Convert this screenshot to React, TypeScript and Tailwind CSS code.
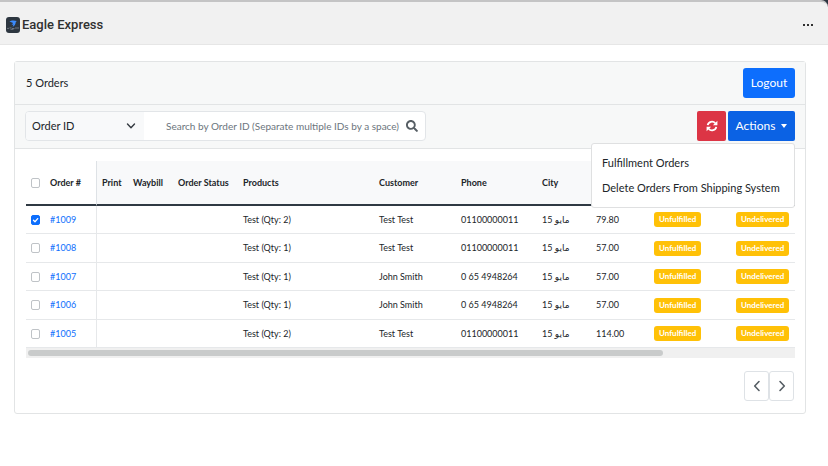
import { useState } from "react";
import { FaSearch } from "react-icons/fa";

const orders = [
  { id: "#1009", products: "Test (Qty: 2)", customer: "Test Test", phone: "01100000011", total: "79.80" },
  { id: "#1008", products: "Test (Qty: 1)", customer: "Test Test", phone: "01100000011", total: "57.00" },
  { id: "#1007", products: "Test (Qty: 1)", customer: "John Smith", phone: "0 65 4948264", total: "57.00" },
  { id: "#1006", products: "Test (Qty: 1)", customer: "John Smith", phone: "0 65 4948264", total: "57.00" },
  { id: "#1005", products: "Test (Qty: 2)", customer: "Test Test", phone: "01100000011", total: "114.00" },
];

const headings = ["Print", "Waybill", "Order Status", "Products", "Customer", "Phone", "City"];

function Tick({ label, checked, onChange }: { label: string; checked: boolean; onChange: () => void }) {
  return (
    <span className="relative mx-auto block h-[10px] w-[9px]">
      <input
        type="checkbox"
        aria-label={label}
        checked={checked}
        onChange={onChange}
        className="block h-full w-full appearance-none rounded-[2px] border border-[#bfc3c7] bg-white checked:border-[#0d6efd] checked:bg-[#0d6efd]"
      />
      {checked && (
        <svg viewBox="0 0 9 10" className="pointer-events-none absolute inset-0" fill="none" stroke="white" strokeWidth="1.3" strokeLinecap="round" strokeLinejoin="round">
          <path d="M2.5 5.2 4 6.7 6.7 3.6" />
        </svg>
      )}
    </span>
  );
}

function Badge({ children }: { children: string }) {
  return (
    <span className="inline-block h-[15px] rounded-[3px] bg-[#ffc107] px-[5px] align-middle text-[8px] leading-[15px] font-bold text-white">
      {children}
    </span>
  );
}

function Chevron({ d }: { d: string }) {
  return (
    <svg viewBox="0 0 10 14" className="h-[14px] w-[10px]" fill="none" stroke="#565e64" strokeWidth="1.6" strokeLinecap="round" strokeLinejoin="round">
      <path d={d} />
    </svg>
  );
}

function RefreshIcon() {
  return (
    <svg viewBox="0 0 12 12" className="h-3 w-3" aria-hidden="true">
      <path d="M1.700 5.200A4.300 4.300 0 0 1 9.300 3.300M10.300 6.800A4.300 4.300 0 0 1 2.700 8.700" fill="none" stroke="white" strokeWidth="1.800" />
      <path d="M11.400.7v4.500H6.900zM.6 11.300V6.800h4.500z" fill="white" />
    </svg>
  );
}

function TopBar() {
  return (
    <div className="bg-[#2c3440]">
      <header className="flex h-[45px] items-center justify-between rounded-tr-[7px] border-t-2 border-b border-t-[#c4c4c5] border-b-[#e6e6e6] bg-[#f1f1f1] pt-[3px] pr-[15px] pl-[6px]">
        <div className="flex items-center gap-[2px]">
          <svg viewBox="0 0 14 16" className="h-4 w-[14px]" aria-hidden="true">
            <rect width="14" height="16" rx="3" fill="#2d3640" />
            <path d="M3.300 4.600C5 3.300 8 3 10.800 4L9.800 5C9.600 7.200 8.600 8.900 6.600 10c.4-1 .9-1.900.6-2.700-.5.300-1.100.6-1.700.9.300-1 .9-1.600 1.700-2.200-1.200-.5-2.500-1-3.900-1.400z" fill="#3b8cff" />
            <path d="M1 11.400h2M3.500 10.900h2M6 11.500h2.500M9 11h4M4.500 12.300h3" stroke="#7d8791" strokeWidth=".8" />
          </svg>
          <h1 className="font-[Roboto,sans-serif] text-[13px] leading-5 font-medium text-[#303030]">Eagle Express</h1>
        </div>
        <button type="button" aria-label="More" className="flex gap-[2px]">
          <i className="h-[2px] w-[2px] bg-[#303030]" />
          <i className="h-[2px] w-[2px] bg-[#303030]" />
          <i className="h-[2px] w-[2px] bg-[#303030]" />
        </button>
      </header>
    </div>
  );
}

export default function App() {
  const [selected, setSelected] = useState<string[]>(["#1009"]);
  const toggle = (id: string) =>
    setSelected((s) => (s.includes(id) ? s.filter((x) => x !== id) : [...s, id]));
  const all = selected.length === orders.length;

  return (
    <div className="min-h-screen bg-white font-[Lato,'DejaVu_Sans',sans-serif] text-[#212529]">
      <TopBar />
      <main className="mt-4 mr-[22px] ml-[14px] rounded-[3px] border border-[#e2e4e5]">
        <div className="flex h-[43px] items-center justify-between border-b border-[#e2e4e5] bg-[#f7f8f8] pr-[10px] pl-[11px]">
          <h2 className="text-[11px] leading-4">5 Orders</h2>
          <button type="button" className="h-[30px] w-[52px] rounded-[3px] bg-[#0d6efd] text-[12px] text-white">Logout</button>
        </div>

        <div className="flex h-[44px] items-start justify-between border-b border-[#e2e4e5] bg-[#f7f8f8] px-[10px] pt-[6px]">
          <div className="flex h-[30px] w-[401px] overflow-hidden rounded-[4px] border border-[#e2e5e8] bg-white">
            <div className="relative w-[118px] bg-[#f8f9fa]">
              <select aria-label="Search field" className="h-full w-full appearance-none pl-[6px] text-[11px] outline-none">
                <option>Order ID</option>
              </select>
              <svg viewBox="0 0 10 8" className="pointer-events-none absolute top-[10px] right-[8px] h-2 w-[10px]" fill="none" stroke="#343a40" strokeWidth="1.4" strokeLinecap="round" strokeLinejoin="round">
                <path d="m1.5 2 3.5 3.7L8.500 2" />
              </svg>
            </div>
            <input
              type="text"
              aria-label="Search"
              placeholder="Search by Order ID (Separate multiple IDs by a space)"
              className="min-w-0 flex-1 pl-[22px] text-[10px] outline-none placeholder:text-[#6c757d]"
            />
            <button type="button" aria-label="Search" className="pr-[7px] pl-1 text-[#565e64]">
              <FaSearch className="h-3 w-3" />
            </button>
          </div>
          <div className="relative flex gap-[2px]">
            <button type="button" aria-label="Refresh" className="flex h-[30px] w-[29px] items-center justify-center rounded-[2px] bg-[#dc3545]">
              <RefreshIcon />
            </button>
            <button type="button" aria-expanded="true" className="flex h-[30px] w-[67px] items-center justify-center gap-[6px] rounded-[2px] bg-[#0b62e4] text-[12px] text-white">
              Actions
              <svg viewBox="0 0 6 4" className="h-1 w-[6px]" fill="white"><path d="M0 0h6L3 4z" /></svg>
            </button>
            <div role="menu" className="absolute top-[32px] right-0 z-10 w-[204px] rounded-[3px] border border-[#dfe0e1] bg-white pt-[7px] pb-[6px]">
              <button type="button" role="menuitem" className="block h-[25px] w-full px-[10px] text-left text-[11px] whitespace-nowrap">Fulfillment Orders</button>
              <button type="button" role="menuitem" className="block h-[25px] w-full px-[10px] text-left text-[11px] whitespace-nowrap">Delete Orders From Shipping System</button>
            </div>
          </div>
        </div>

        <div className="pt-[12px] pr-[10px] pb-[12px] pl-[11px]">
          <div className="overflow-hidden">
            <table className="w-full min-w-[932px] table-fixed border-separate border-spacing-0 text-[9px] leading-[14px] whitespace-nowrap">
              <colgroup>
                <col className="w-[19px]" />
                <col className="w-[52px]" />
                <col className="w-[31px]" />
                <col className="w-[45px]" />
                <col className="w-[65px]" />
                <col className="w-[136px]" />
                <col className="w-[82px]" />
                <col className="w-[81px]" />
                <col className="w-[54px]" />
                <col className="w-[58px]" />
                <col className="w-[82px]" />
                <col />
              </colgroup>
              <thead>
                <tr className="h-[45px] text-left *:border-b-2 *:border-[#2f3943]">
                  <th><Tick label="Select all orders" checked={all} onChange={() => setSelected(all ? [] : orders.map((o) => o.id))} /></th>
                  <th className="border-r border-r-[#dee2e6]! px-[5px]">Order #</th>
                  {headings.map((h) => (
                    <th key={h} className="bg-[#f8f9fa] px-[5px]">{h}</th>
                  ))}
                  <td colSpan={3} className="bg-[#f8f9fa]" />
                </tr>
              </thead>
              <tbody>
                {orders.map((o) => (
                  <tr key={o.id} className="odd:h-[28px] even:h-[29px] *:border-b *:border-[#e6e8ea]">
                    <td><Tick label={`Select order ${o.id}`} checked={selected.includes(o.id)} onChange={() => toggle(o.id)} /></td>
                    <td className="border-r border-r-[#dee2e6] px-[5px]"><a href="#order" className="text-[#0d6efd]">{o.id}</a></td>
                    <td /><td /><td />
                    <td className="px-[5px]">{o.products}</td>
                    <td className="px-[5px]">{o.customer}</td>
                    <td className="px-[5px]">{o.phone}</td>
                    <td className="px-[5px]">15 مايو</td>
                    <td className="px-[5px]">{o.total}</td>
                    <td className="px-[5px]"><Badge>Unfulfilled</Badge></td>
                    <td className="px-[5px]"><Badge>Undelivered</Badge></td>
                  </tr>
                ))}
              </tbody>
            </table>
          </div>
          <div className="h-[10px] bg-[#f0f0f0] px-[2px] pt-[2px]">
            <div className="h-[6px] w-[83%] rounded-full bg-[#c9cbcb]" />
          </div>
          <nav aria-label="Pages" className="mt-[13px] flex justify-end pr-px">
            <button type="button" aria-label="Previous page" className="flex h-[30px] w-[25px] items-center justify-center rounded-[3px] border border-[#dee2e6]">
              <Chevron d="M7 2.500 2.700 7 7 11.500" />
            </button>
            <button type="button" aria-label="Next page" className="flex h-[30px] w-[25px] items-center justify-center rounded-[3px] border border-[#dee2e6]">
              <Chevron d="M3 2.500 7.300 7 3 11.500" />
            </button>
          </nav>
        </div>
      </main>
    </div>
  );
}
